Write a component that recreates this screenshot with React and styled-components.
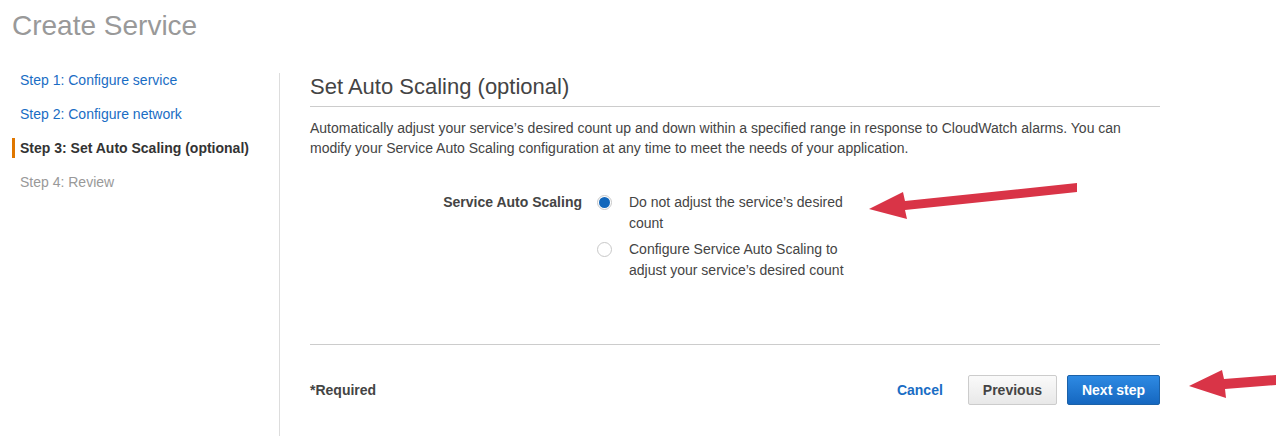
import React from "react";
import styled, { createGlobalStyle } from "styled-components";

const GlobalStyle = createGlobalStyle`
  body {
    margin: 0;
    background: #fff;
    font-family: "Liberation Sans", Arial, sans-serif;
    color: #444;
  }
`;

const steps = [
  { label: "Step 1: Configure service", state: "link" },
  { label: "Step 2: Configure network", state: "link" },
  { label: "Step 3: Set Auto Scaling (optional)", state: "active" },
  { label: "Step 4: Review", state: "disabled" }
];

const options = [
  { label: "Do not adjust the service’s desired count", checked: true },
  {
    label: "Configure Service Auto Scaling to adjust your service’s desired count",
    checked: false
  }
];

const App = () => (
  <Page>
    <GlobalStyle />
    <Title>Create Service</Title>
    <Wizard>
      <Sidebar>
        {steps.map(step => (
          <StepItem key={step.label}>
            <StepLabel state={step.state}>{step.label}</StepLabel>
          </StepItem>
        ))}
      </Sidebar>
      <Main>
        <Heading>Set Auto Scaling (optional)</Heading>
        <Intro>
          Automatically adjust your service’s desired count up and down within
          a specified range in response to CloudWatch alarms. You can modify
          your Service Auto Scaling configuration at any time to meet the needs
          of your application.
        </Intro>
        <FieldRow>
          <FieldLabel>Service Auto Scaling</FieldLabel>
          <OptionList>
            {options.map(opt => (
              <Option key={opt.label}>
                <Radio checked={opt.checked} />
                <OptionText>{opt.label}</OptionText>
              </Option>
            ))}
          </OptionList>
        </FieldRow>
        <Footer>
          <Required>*Required</Required>
          <Actions>
            <LinkButton>Cancel</LinkButton>
            <Button>Previous</Button>
            <Button primary>Next step</Button>
          </Actions>
        </Footer>
      </Main>
    </Wizard>
    <Annotations width="1276" height="446" viewBox="0 0 1276 446">
      <polygon
        points="1077,183 1077,192 905,210 907,219 869,209 903,192 905,201"
        fill="#d93447"
      />
      <polygon
        points="1276,375 1276,385 1225,389 1226,398 1189,386 1222,370 1224,379"
        fill="#d93447"
      />
    </Annotations>
  </Page>
);

export default App;

const Page = styled.div`
  position: relative;
  width: 1276px;
  min-height: 446px;
  padding-left: 12px;
  box-sizing: border-box;
`;

const Title = styled.h1`
  margin: 0;
  padding-top: 9px;
  font-size: 28px;
  line-height: 34px;
  font-weight: normal;
  color: #999;
`;

const Wizard = styled.div`
  display: flex;
  margin-top: 20px;
`;

const Sidebar = styled.ul`
  list-style: none;
  margin: 0;
  padding: 0;
  width: 267px;
  flex-shrink: 0;
`;

const StepItem = styled.li`
  padding: 7px 0;
  font-size: 14px;
  line-height: 20px;
`;

const stepColours = {
  link: "#1a6dc4",
  active: "#333",
  disabled: "#999"
};

const StepLabel = styled.span`
  display: inline-block;
  padding-left: 5px;
  border-left: 3px solid
    ${props => (props.state === "active" ? "#e07700" : "transparent")};
  color: ${props => stepColours[props.state]};
  font-weight: ${props => (props.state === "active" ? "bold" : "normal")};
`;

const Main = styled.div`
  margin-top: 10px;
  border-left: 1px solid #ddd;
  padding: 0 0 31px 30px;
  width: 850px;
`;

const Heading = styled.h2`
  margin: 0;
  padding: 1px 0 6px;
  font-size: 22px;
  line-height: 26px;
  font-weight: normal;
  color: #444;
  border-bottom: 1px solid #ccc;
`;

const Intro = styled.p`
  margin: 11px 0 0;
  font-size: 14px;
  line-height: 20px;
  color: #444;
`;

const FieldRow = styled.div`
  display: grid;
  grid-template-columns: 272px 1fr;
  column-gap: 15px;
  margin-top: 34px;
  padding-bottom: 63px;
  border-bottom: 1px solid #ccc;
`;

const FieldLabel = styled.div`
  text-align: right;
  font-size: 14px;
  line-height: 21px;
  font-weight: bold;
  color: #444;
`;

const OptionList = styled.div`
  display: flex;
  flex-direction: column;
  gap: 5px;
`;

const Option = styled.label`
  display: flex;
  align-items: flex-start;
  gap: 17px;
`;

const Radio = styled.span`
  position: relative;
  flex-shrink: 0;
  width: 13px;
  height: 13px;
  margin-top: 3px;
  border: 1px solid #c8c8c8;
  border-radius: 50%;
  background: #fff;

  &::after {
    content: "";
    position: absolute;
    inset: 1px;
    border-radius: 50%;
    background: ${props => (props.checked ? "#1166bb" : "transparent")};
  }
`;

const OptionText = styled.span`
  width: 222px;
  font-size: 14px;
  line-height: 21px;
  color: #444;
`;

const Footer = styled.div`
  display: flex;
  align-items: center;
  justify-content: space-between;
  padding-top: 30px;
`;

const Required = styled.span`
  font-size: 14px;
  font-weight: bold;
  color: #444;
`;

const Actions = styled.div`
  display: flex;
  align-items: center;
  gap: 10px;
`;

const LinkButton = styled.button`
  border: none;
  background: none;
  padding: 0;
  margin-right: 15px;
  font-family: inherit;
  font-size: 14px;
  font-weight: bold;
  color: #1a6dc4;
  cursor: pointer;
`;

const Button = styled.button`
  height: 30px;
  padding: 0 14px;
  border: 1px solid ${props => (props.primary ? "#1b61a8" : "#ccc")};
  border-radius: 2px;
  background: ${props =>
    props.primary
      ? "linear-gradient(#2e8ae3, #1567c0)"
      : "linear-gradient(#fafafa, #e8e8e8)"};
  color: ${props => (props.primary ? "#fff" : "#444")};
  font-family: inherit;
  font-size: 14px;
  font-weight: bold;
  cursor: pointer;
`;

const Annotations = styled.svg`
  position: absolute;
  top: 0;
  left: 0;
  pointer-events: none;
`;
